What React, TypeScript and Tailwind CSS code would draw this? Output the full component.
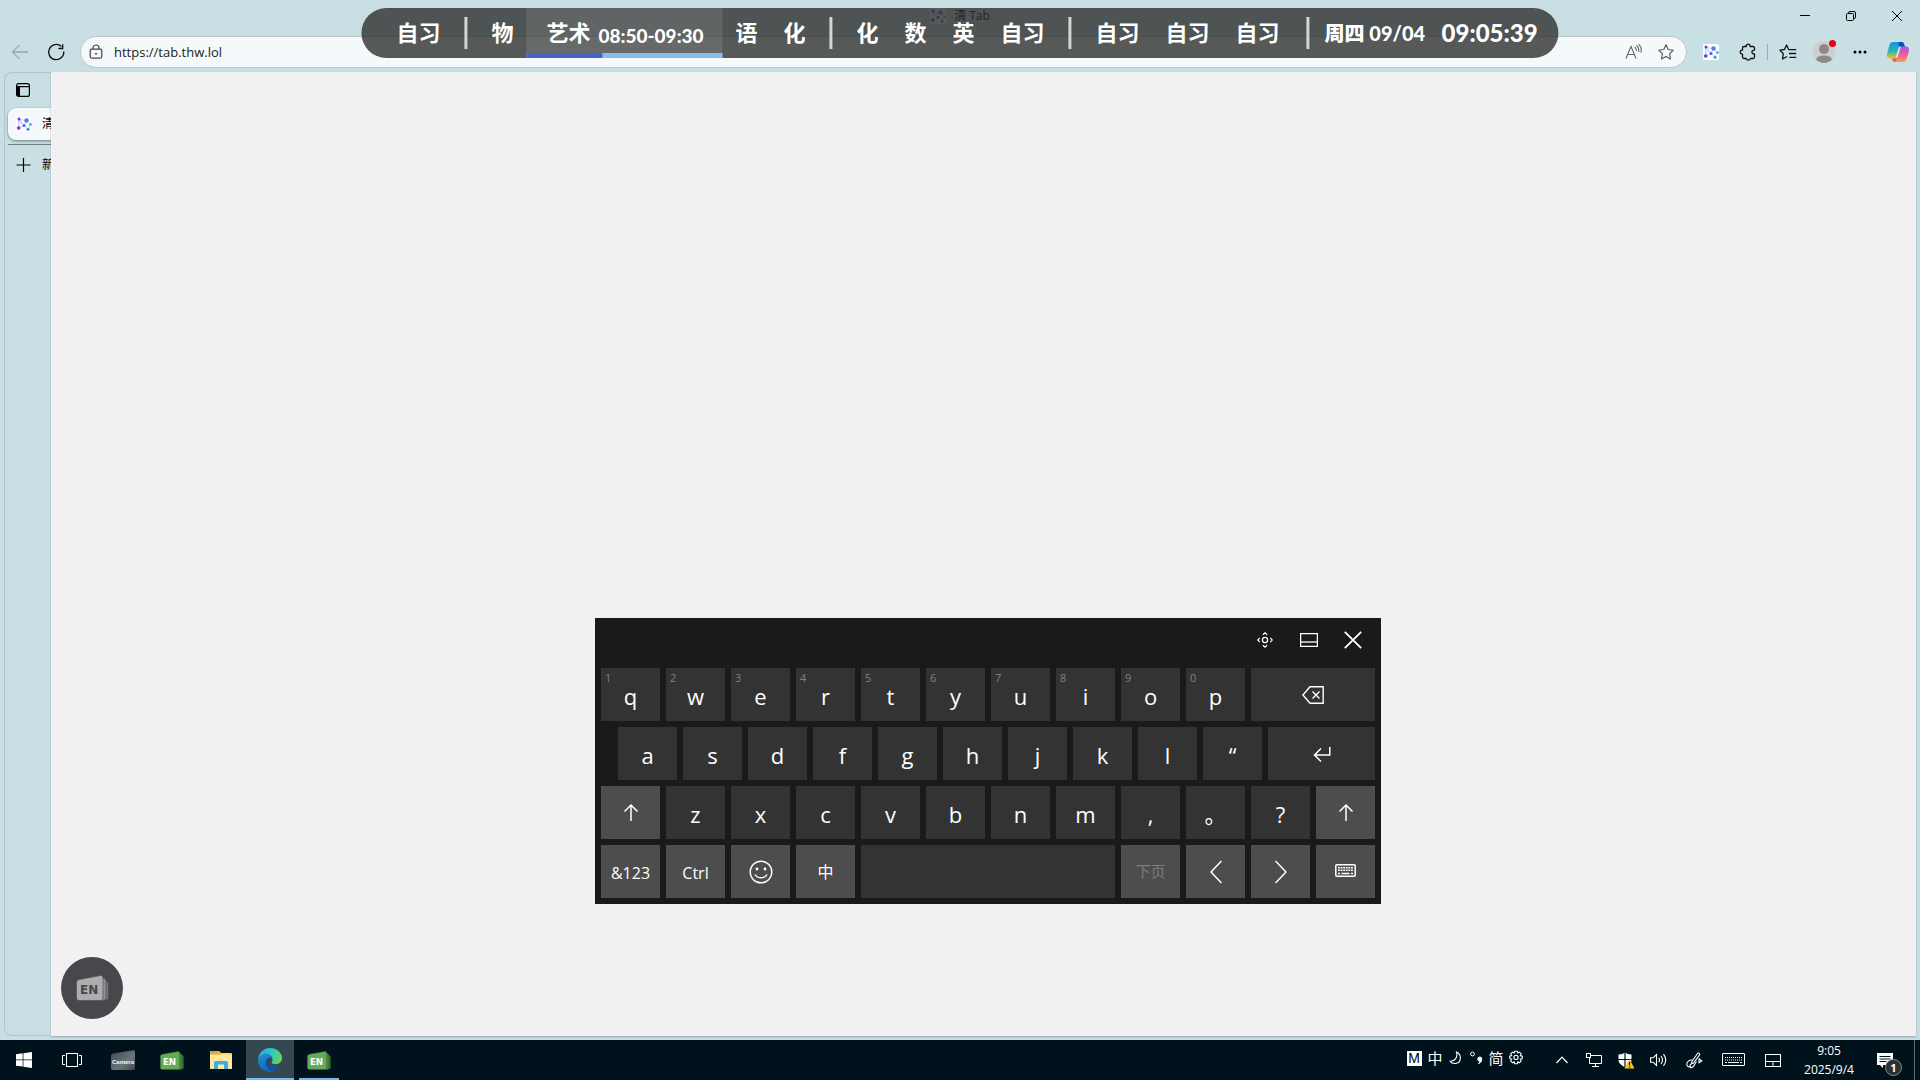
import React from "react";

type IconProps = { className?: string };

const UI = "font-['Open_Sans','Noto_Sans_CJK_SC',sans-serif]";

/* ---------- Browser icons ---------- */

const TabLogo = ({ className = "" }: IconProps) => (
  <svg viewBox="0 0 16 16" className={`size-4 shrink-0 ${className}`} aria-hidden="true">
    <rect width="16" height="16" rx="1.5" fill="#fbfdff" />
    <path d="M3 3.500 10.500 4.500 14.500 8.500 12 13 8 9.500 2.500 12ZM3 3.500 8 9.500M10.500 4.500 8 9.500M3 3.500 2.500 12" fill="none" stroke="#c3c5f3" strokeWidth=".8" />
    <circle cx="3" cy="3" r="1.500" fill="#6d35e6" />
    <circle cx="10.500" cy="4.500" r="2.200" fill="#4b83ee" />
    <circle cx="2.700" cy="12" r="1.800" fill="#7034ea" />
    <circle cx="8" cy="9.500" r="1.500" fill="#4b63e4" />
    <circle cx="14.500" cy="8.500" r="1.300" fill="#2fa6f4" />
    <circle cx="12" cy="13.300" r="1.500" fill="#3b8cf2" />
    <circle cx="5.500" cy="7" r=".8" fill="#9db2f5" />
  </svg>
);

const Back = () => (
  <svg viewBox="0 0 18 18" className="size-[18px]" fill="none" stroke="#7d898c" aria-hidden="true">
    <path d="M17 9H1.500M8.500 2 1.500 9l7 7" />
  </svg>
);

const Reload = () => (
  <svg viewBox="0 0 18 18" className="size-[18px]" fill="none" stroke="#111" strokeWidth="1.300" aria-hidden="true">
    <path d="M16.800 8.500a7.600 7.600 0 1 1-2.400-5M15.700 1.200v4.300h-4.300" />
  </svg>
);

const Lock = () => (
  <svg viewBox="0 0 14 16" className="h-4 w-[14px]" fill="none" stroke="#444" strokeWidth="1.200" aria-hidden="true">
    <rect x="1.200" y="5.200" width="11.600" height="9" rx="1.800" />
    <path d="M4 5V4a3 3 0 0 1 6 0v1" />
    <circle cx="7" cy="9.700" r="1" fill="#444" stroke="none" />
  </svg>
);

const ReadAloud = () => (
  <svg viewBox="0 0 18 18" className="size-[18px]" fill="none" stroke="#666" strokeWidth="1.100" aria-hidden="true">
    <path d="M1 15.500 6 3.500l5 12M2.800 11.500h6.500M9.800 4c1.300 1 1.700 2.400 1.500 4M11.500 2.500c2 1.600 2.700 3.700 2.200 6.500M13.500 1.200c2.400 2 3.200 4.800 2.500 8.300" />
  </svg>
);

const STAR = "m9 1.800 2.200 4.700 5.100.7-3.700 3.600.9 5.200L9 13.500l-4.500 2.500.9-5.200L1.700 7.200l5.100-.7Z";

const Star = () => (
  <svg viewBox="0 0 18 18" className="size-[18px]" fill="none" stroke="#555" strokeWidth="1.100" strokeLinejoin="round" aria-hidden="true">
    <path d={STAR} />
  </svg>
);

const Puzzle = () => (
  <svg viewBox="0 0 18 18" className="size-[18px]" fill="none" stroke="#111" strokeWidth="1.300" strokeLinejoin="round" aria-hidden="true">
    <path d="M5 3.500h2.300c-.2-1.500.8-2.300 1.900-2.300s2.100.8 1.900 2.300H14a1.500 1.500 0 0 1 1.500 1.500v2.200c-1.700-.1-2.600.7-2.600 1.900s.9 2 2.600 1.900V14a1.500 1.500 0 0 1-1.500 1.500h-2.600c-.2 1.100-.9 1.700-2 1.700s-1.900-.6-2.100-1.700H5A1.500 1.500 0 0 1 3.500 14v-2.800C2 11.200 1.200 10.300 1.200 9.100S2 7.100 3.500 7.200V5A1.500 1.500 0 0 1 5 3.500Z" />
  </svg>
);

const Favorites = () => (
  <svg viewBox="0 0 18 18" className="size-[18px]" fill="none" stroke="#111" strokeWidth="1.300" strokeLinejoin="round" aria-hidden="true">
    <path d="M9.500 6.200 7.600 2 5.500 6.500 1 7.200l3.300 3.400L3.500 16l4.600-2.500M9.300 6.700h7.900M10 10.500h7.200M10.500 14.300h6.700" />
  </svg>
);

const Copilot = () => (
  <svg viewBox="0 0 24 24" className="size-6" aria-hidden="true">
    <defs>
      <linearGradient id="cpA" x1="0" y1="0" x2="0" y2="1">
        <stop offset="0" stopColor="#1694e6" />
        <stop offset=".55" stopColor="#28b4b0" />
        <stop offset="1" stopColor="#f4c51c" />
      </linearGradient>
      <linearGradient id="cpB" x1="0" y1="0" x2="0" y2="1">
        <stop offset="0" stopColor="#a457ec" />
        <stop offset=".5" stopColor="#ee5b9b" />
        <stop offset="1" stopColor="#fb9a4b" />
      </linearGradient>
    </defs>
    <path d="M7 2h8.500c2 0 2.500 1.600 3 3.500L19 7h-3.500c-2 0-2.800 1.200-3.300 3L10.500 16c-.6 2-1.300 2.500-3 2.500H4C1.200 18.500.5 16 1.200 13L3.500 5C4.100 3 5 2 7 2Z" fill="url(#cpA)" />
    <path d="M13 2h2.500c2 0 2.500 1.600 3 3.500L19 7h-3.500c-2 0-2.800-.5-3.200-2Z" fill="#1549b5" />
    <path d="M17 22H9.500c-2 0-3-1.200-3.500-3.500H8c2 0 2.800-1 3.300-3L13 9c.5-1.600 1.500-2.500 3-2.500h4c2.800 0 3.500 2.500 2.800 5L20.500 19c-.6 2-1.500 3-3.500 3Z" fill="url(#cpB)" />
    <path d="m12.200 9.800 1-3.300h1.600l-2.900 9.600-1 1.700H9.700Z" fill="#dff0f2" />
    <path d="M6 18.500h2c1.200 0 2-.3 2.500-1L9.500 22C7.300 22 6.500 20.500 6 18.500Z" fill="#f4592f" />
  </svg>
);

/* ---------- Browser chrome ---------- */

const TitleBar = () => (
  <header className="relative flex h-9 shrink-0 items-start justify-center">
    <div className="flex h-8 items-center gap-2 text-xs text-black">
      <TabLogo />
      <span>清 Tab</span>
    </div>
    <div className="absolute top-0 right-0 flex">
      <button aria-label="最小化" className="flex h-8 w-[46px] items-center justify-center">
        <svg viewBox="0 0 12 12" className="size-3" stroke="#000" fill="none"><path d="M1 5.500h10" /></svg>
      </button>
      <button aria-label="还原" className="flex h-8 w-[46px] items-center justify-center">
        <svg viewBox="0 0 12 12" className="size-3" stroke="#000" fill="none">
          <rect x="1.500" y="3.500" width="7" height="7" rx="1" />
          <path d="M3.500 3.500V3A1.500 1.500 0 0 1 5 1.500h4A1.500 1.500 0 0 1 10.500 3v4A1.500 1.500 0 0 1 9 8.500h-.5" />
        </svg>
      </button>
      <button aria-label="关闭" className="flex h-8 w-[46px] items-center justify-center">
        <svg viewBox="0 0 12 12" className="size-3" stroke="#000" fill="none"><path d="m1 1 10 10M11 1 1 11" /></svg>
      </button>
    </div>
  </header>
);

const Toolbar = () => (
  <div className="flex h-9 shrink-0 items-start pr-[10px] pl-[11px]">
    <button aria-label="后退" className="flex h-8 w-[18px] items-center"><Back /></button>
    <button aria-label="刷新" className="ml-[18px] flex h-8 w-[18px] items-center"><Reload /></button>
    <div className="ml-[15px] flex h-8 grow items-center rounded-full border border-[#bfc5c6] bg-[#f5f9fb] pr-1 pl-2">
      <Lock />
      <input
        aria-label="地址栏"
        defaultValue="https://tab.thw.lol"
        className="ml-[11px] min-w-0 grow bg-transparent text-[13px] leading-5 text-[#222] outline-none"
      />
      <button aria-label="大声朗读" className="flex size-8 items-center justify-center"><ReadAloud /></button>
      <button aria-label="收藏此页" className="flex size-8 items-center justify-center"><Star /></button>
    </div>
    <div className="flex h-8 items-center pl-4">
      <button aria-label="清 Tab 扩展"><TabLogo /></button>
      <button aria-label="扩展" className="ml-5"><Puzzle /></button>
      <span className="ml-[10px] h-4 w-px bg-[#9aaeb2]" />
      <button aria-label="收藏夹" className="ml-[11px]"><Favorites /></button>
      <button aria-label="个人资料" className="relative ml-4 size-[22px]">
        <svg viewBox="0 0 22 22" className="size-[22px]">
          <circle cx="11" cy="11" r="11" fill="#d0cecc" />
          <circle cx="11" cy="8" r="5" fill="#8b8886" />
          <path d="M3 18.500c1-3 4-4 8-4s7 1 8 4A11 11 0 0 1 11 22a11 11 0 0 1-8-3.500Z" fill="#8b8886" />
        </svg>
        <span className="absolute -top-px -right-px size-[7px] rounded-full bg-[#e60012]" />
      </button>
      <button aria-label="设置及其他" className="ml-[18px]">
        <svg viewBox="0 0 14 4" className="h-1 w-[14px]"><circle cx="2" cy="2" r="1.500" /><circle cx="7" cy="2" r="1.500" /><circle cx="12" cy="2" r="1.500" /></svg>
      </button>
      <button aria-label="Copilot" className="ml-[19px]"><Copilot /></button>
    </div>
  </div>
);

const SideTabs = () => (
  <nav aria-label="垂直标签页" className="flex w-[47px] shrink-0 flex-col overflow-hidden rounded-l-lg border border-r-0 border-[#b0c8cc] pl-[3px] text-xs text-black">
    <button aria-label="标签页操作" className="flex h-[35px] shrink-0 items-center pb-[2px] pl-2">
      <svg viewBox="0 0 14 14" className="size-[14px]" fill="none" stroke="#000" strokeWidth="1.200">
        <rect x=".6" y=".6" width="12.800" height="12.800" rx="2" />
        <path d="M1 3.700h12" />
        <path d="M1 3.500h3v9.500H2Q1 13 1 12Z" fill="#000" stroke="none" />
      </svg>
    </button>
    <button className="flex h-8 w-[220px] shrink-0 items-center gap-[10px] rounded-lg bg-[#f5f9fb] pl-2 shadow-[0_1px_3px_rgba(0,0,0,0.45)]">
      <TabLogo />
      <span>清 Tab</span>
    </button>
    <hr className="mt-1 shrink-0 border-[#747f82]" />
    <button className="mt-1 flex h-8 w-[220px] shrink-0 items-center gap-[10px] pl-2">
      <svg viewBox="0 0 16 16" className="size-4 shrink-0" stroke="#000" strokeWidth="1.200"><path d="M7.500 1v14M.5 8h14" /></svg>
      <span>新建标签页</span>
    </button>
  </nav>
);

/* ---------- Stacked "EN" card logo ---------- */

const EnCards = ({ front, back, mid, edge, ink, className }: { front: string; back: string; mid: string; edge: string; ink: string; className: string }) => (
  <svg viewBox="0 0 33 26" className={className} aria-hidden="true">
    <path d="M26 5.500h3.500q3 .5 3 3v14q0 2.500-3 2.500H26Z" fill={back} stroke={edge} strokeWidth=".6" />
    <path d="M24 3h3.500q2.500.5 2.500 3v17q0 2.500-3 2.500h-3Z" fill={mid} stroke={edge} strokeWidth=".6" />
    <path d="M3 4.500 24.500.6q2.500-.4 2.500 2V23q0 2.500-2.500 2.500H3Q.5 25.500.5 23V7.500Q.5 5 3 4.500Z" fill={front} stroke={edge} strokeWidth=".6" />
    <text x="4" y="19" fontSize="12" fontWeight="700" fontFamily="DejaVu Sans, sans-serif" fill={ink}>EN</text>
  </svg>
);

/* ---------- Class schedule ---------- */

const Lesson = ({ children }: { children: string }) => <li className="px-[13px]">{children}</li>;
const Bar = () => <li aria-hidden="true" className="mx-[11px] h-8 w-[3px] bg-[#d4d6d6]" />;

const Schedule = () => (
  <section
    aria-label="课程表"
    className="absolute top-2 left-1/2 flex h-[50px] -translate-x-1/2 items-center rounded-full bg-[#303030]/80 pr-[22px] pl-[22px] font-['Lato','Noto_Sans_CJK_SC',sans-serif] text-[22px] leading-8 font-bold whitespace-nowrap text-white"
  >
    <ul className="flex h-full items-center">
      <Lesson>自习</Lesson>
      <Bar />
      <Lesson>物</Lesson>
      <li className="relative flex h-full w-[196px] items-center gap-2 bg-white/10 pl-5">
        <span>艺术</span>
        <span className="pt-[6px] text-[19px] leading-6 font-black">08:50-09:30</span>
        <span className="absolute inset-x-0 bottom-0 flex h-[5px] bg-[#8abcf0]">
          <span className="w-[39%] bg-[#4466c4]" />
        </span>
      </li>
      <Lesson>语</Lesson>
      <Lesson>化</Lesson>
      <Bar />
      <Lesson>化</Lesson>
      <Lesson>数</Lesson>
      <Lesson>英</Lesson>
      <Lesson>自习</Lesson>
      <Bar />
      <Lesson>自习</Lesson>
      <Lesson>自习</Lesson>
      <Lesson>自习</Lesson>
      <li aria-hidden="true" className="mr-[15px] ml-[14px] h-8 w-[3px] bg-[#d4d6d6]" />
    </ul>
    <span className="w-[117px] text-[20px] font-black">周四 09/04</span>
    <time className="w-[95px] text-[24px] font-black">09:05:39</time>
  </section>
);

/* ---------- Touch keyboard ---------- */

const keyBase = "relative flex h-[53px] items-center justify-center";

const LetterKey = ({ label, hint }: { label: string; hint?: string }) => (
  <button className={`${keyBase} w-[59px] bg-[#333] pt-[2px] text-[22px] leading-7 text-white`}>
    {hint && <span className="absolute top-1 left-1 text-[11px] leading-3 text-[#808080]">{hint}</span>}
    {label}
  </button>
);

const FnKey = ({ label, children, dim }: { label: string; children: React.ReactNode; dim?: boolean }) => (
  <button aria-label={label} className={`${keyBase} w-[59px] bg-[#4d4d4d] text-[16px] ${dim ? "text-[#7c7c7c]" : "text-white"}`}>
    {children}
  </button>
);

const ShiftArrow = () => (
  <svg viewBox="0 0 16 20" className="h-5 w-4" fill="none" stroke="#fff" strokeWidth="1.500"><path d="M8 18V2M1.500 8.500 8 2l6.500 6.500" /></svg>
);

const Keyboard = () => (
  <section aria-label="触摸键盘" className="absolute top-[618px] left-[595px] flex flex-col gap-[6px] bg-[#1a1a1a] px-[6px] pb-[6px]">
    <div className="flex h-11 items-center justify-end">
      <button aria-label="移动" className="flex h-11 w-11 items-center justify-center">
        <svg viewBox="0 0 16 16" className="size-4" fill="none" stroke="#fff" strokeWidth="1.200">
          <circle cx="8" cy="8" r="2.600" />
          <path d="M5.800 2.700 8 .8l2.200 1.900M5.800 13.300 8 15.200l2.200-1.900M2.700 5.800.8 8l1.900 2.200M13.300 5.800 15.200 8l-1.900 2.200" />
        </svg>
      </button>
      <button aria-label="停靠" className="flex h-11 w-11 items-center justify-center">
        <svg viewBox="0 0 18 14" className="h-[14px] w-[18px]" fill="none" stroke="#fff" strokeWidth="1.300"><rect x=".6" y=".6" width="16.800" height="12.800" /><path d="M1 9h16" /></svg>
      </button>
      <button aria-label="关闭键盘" className="flex h-11 w-11 items-center justify-center">
        <svg viewBox="0 0 18 18" className="size-[18px]" fill="none" stroke="#fff" strokeWidth="1.800"><path d="m.8.8 16.400 16.400M17.200.8.8 17.200" /></svg>
      </button>
    </div>
    <div className="flex gap-[6px]">
      {"qwertyuiop".split("").map((k, i) => <LetterKey key={k} label={k} hint={String((i + 1) % 10)} />)}
      <button aria-label="退格" className={`${keyBase} w-[124px] bg-[#333]`}>
        <svg viewBox="0 0 22 18" className="h-[18px] w-[22px]" fill="none" stroke="#fff" strokeWidth="1.400"><path d="M8 .8h13.200v16.400H8L.9 9ZM10.500 5.500l7 7M17.500 5.500l-7 7" /></svg>
      </button>
    </div>
    <div className="flex gap-[6px] pl-[17px]">
      {"asdfghjkl“".split("").map((k) => <LetterKey key={k} label={k} />)}
      <button aria-label="回车" className={`${keyBase} w-[107px] bg-[#333]`}>
        <svg viewBox="0 0 18 16" className="h-4 w-[18px]" fill="none" stroke="#fff" strokeWidth="1.500"><path d="M16.800 1v8H1.500M8 2.500 1.500 9 8 15.500" /></svg>
      </button>
    </div>
    <div className="flex gap-[6px]">
      <FnKey label="Shift"><ShiftArrow /></FnKey>
      {"zxcvbnm,。?".split("").map((k) => <LetterKey key={k} label={k} />)}
      <FnKey label="右 Shift"><ShiftArrow /></FnKey>
    </div>
    <div className="flex gap-[6px]">
      <FnKey label="&123"><span className="pt-[2px]">&amp;123</span></FnKey>
      <FnKey label="Ctrl"><span className="pt-[2px]">Ctrl</span></FnKey>
      <FnKey label="表情符号">
        <svg viewBox="0 0 24 24" className="size-6" fill="none" stroke="#fff" strokeWidth="1.400">
          <circle cx="12" cy="12" r="10.800" />
          <path d="M6 14.500c2.500 4.300 9.500 4.300 12 0" />
          <circle cx="8" cy="9" r="1.400" fill="#fff" stroke="none" /><circle cx="16" cy="9" r="1.400" fill="#fff" stroke="none" />
        </svg>
      </FnKey>
      <FnKey label="中文">中</FnKey>
      <button aria-label="空格" className={`${keyBase} w-[254px] bg-[#333]`} />
      <FnKey label="下页" dim><span className="text-[15px]">下页</span></FnKey>
      <FnKey label="向左"><svg viewBox="0 0 12 24" className="h-6 w-3" fill="none" stroke="#fff" strokeWidth="1.500"><path d="M11.500 1 1 12l10.500 11" /></svg></FnKey>
      <FnKey label="向右"><svg viewBox="0 0 12 24" className="h-6 w-3" fill="none" stroke="#fff" strokeWidth="1.500"><path d="M.5 1 11 12 .5 23" /></svg></FnKey>
      <FnKey label="键盘布局">
        <svg viewBox="0 0 21 13" className="mb-[2px] h-[13px] w-[21px]" fill="none" stroke="#fff" strokeWidth="1.500">
          <rect x=".8" y=".8" width="19.400" height="11.400" rx="1" />
          <path d="M3 3.700h15M3 6.300h15" strokeWidth="1.600" strokeDasharray="1.900 .7" /><path d="M3 9.500h2M6.500 9.500h8M16 9.500h2" />
        </svg>
      </FnKey>
    </div>
  </section>
);

/* ---------- Taskbar ---------- */

const TaskButton = ({ label, children, className = "" }: { label: string; children: React.ReactNode; className?: string }) => (
  <button aria-label={label} className={`relative flex h-10 w-12 items-center justify-center ${className}`}>{children}</button>
);

const EdgeLogo = () => (
  <svg viewBox="0 0 24 24" className="size-6">
    <defs>
      <linearGradient id="eg1" x1="0" y1=".3" x2="1" y2=".5"><stop offset="0" stopColor="#2ba8e0" /><stop offset=".55" stopColor="#2fc6c9" /><stop offset="1" stopColor="#62dc52" /></linearGradient>
      <linearGradient id="eg2" x1="0" y1="0" x2=".4" y2="1"><stop offset="0" stopColor="#1b93dc" /><stop offset="1" stopColor="#1069bd" /></linearGradient>
    </defs>
    <path d="M.2 10.500C1 4.500 6 0 12 0c6.700 0 12 4.600 12 10 0 3.900-3 6.200-6.300 6.200-2.700 0-4.200-.9-4.200-1.700 0-.6 1-1 1-2.700 0-2.600-2.800-5-6.200-5-3.800 0-6.500 1.400-8.100 3.700Z" fill="url(#eg1)" />
    <path d="M0 12c.4-3.600 4-6.200 8.200-6.200 3 0 5.700 1.700 6.200 4-3.800-1.300-6.600 1.500-6.600 5 0 4.200 3.300 8 8 8.500A12 12 0 0 1 0 12Z" fill="url(#eg2)" />
    <path d="M9.700 11c-1.200 1-1.900 2.200-1.900 4 0 4 3 7.800 8 8.300 2.700-.8 4.900-2.400 6.400-4.700.3-.5-.1-.8-.5-.6-1 .4-2.300.7-3.700.7-5 0-8.500-3.400-8.300-7.700Z" fill="#1a4f9b" />
  </svg>
);

const TrayIcon = ({ label, children, className }: { label: string; children: React.ReactNode; className: string }) => (
  <button aria-label={label} className={`flex h-10 items-center justify-center ${className}`}>{children}</button>
);

const greenCards = <EnCards className="h-[19px] w-6" front="#63ab57" mid="#4a8a42" back="#356b32" edge="#2f5f2e" ink="#fff" />;

const Taskbar = () => (
  <footer className="flex h-10 shrink-0 items-center justify-between bg-[#00131d] text-white">
    <div className="flex">
      <TaskButton label="开始">
        <svg viewBox="0 0 16 16" className="size-4" fill="#fff"><path d="M0 2.300 6.700 1.300v6.300H0ZM7.400 1.200 16 0v7.600H7.400ZM0 8.300h6.700v6.300L0 13.700ZM7.400 8.300H16V16l-8.600-1.200Z" /></svg>
      </TaskButton>
      <TaskButton label="任务视图">
        <svg viewBox="0 0 20 14" className="h-[14px] w-5" fill="none" stroke="#fff"><rect x="4.500" y=".5" width="11" height="13" /><path d="M3 2.500H.5v9H3M17 2.500h2.500v9H17" /></svg>
      </TaskButton>
      <div className="ml-[3px] flex gap-px">
        <TaskButton label="Camera">
          <svg viewBox="0 0 24 20" className="h-5 w-6">
            <defs><linearGradient id="cam" x1="0" y1="0" x2="1" y2="1"><stop offset="0" stopColor="#3f4850" /><stop offset=".6" stopColor="#6b747a" /><stop offset="1" stopColor="#40474d" /></linearGradient></defs>
            <path d="M2 3.500 22 .2q2-.3 2 1.800v16q0 2-2 2H2q-2 0-2-2V5.500q0-1.700 2-2Z" fill="url(#cam)" />
            <text x="12" y="14" textAnchor="middle" fontSize="6" fontWeight="700" fontFamily="Liberation Sans, sans-serif" fill="#f2f5f7">Camera</text>
          </svg>
        </TaskButton>
        <TaskButton label="EN">{greenCards}</TaskButton>
        <TaskButton label="文件资源管理器">
          <svg viewBox="0 0 22 18" className="h-[18px] w-[22px]">
            <path d="M0 1q0-1 1-1h8l2 2h10q1 0 1 1v14q0 1-1 1H1q-1 0-1-1Z" fill="#fbd775" /><path d="M0 2V1q0-1 1-1h8l2 2v1.500H0Z" fill="#eeb02f" /><path d="M1.500 1.200h3" stroke="#49a6d8" />
            <path d="M0 4h22v13q0 1-1 1H1q-1 0-1-1Z" fill="#ffe69b" />
            <path d="M4 18v-6q0-2 2-2h10q2 0 2 2v6h-4v-4.500H8V18Z" fill="#3aaee3" />
          </svg>
        </TaskButton>
        <TaskButton label="Microsoft Edge" className="bg-[#35474f]">
          <EdgeLogo />
          <span className="absolute inset-x-0 bottom-0 h-[2px] bg-[#76b9ed]" />
        </TaskButton>
        <TaskButton label="EN 窗口">
          {greenCards}
          <span className="absolute inset-x-1 bottom-0 h-[2px] bg-[#76b9ed]" />
        </TaskButton>
      </div>
    </div>
    <div className="flex items-center">
      <div className="mr-5 flex items-center pb-1 text-[15px]">
        <TrayIcon label="输入法" className="w-5"><span className="flex size-[15px] items-center justify-center bg-white font-['Liberation_Sans',sans-serif] text-[14px] text-black">M</span></TrayIcon>
        <TrayIcon label="中文" className="w-[22px]">中</TrayIcon>
        <TrayIcon label="半角" className="w-5"><svg viewBox="0 0 14 14" className="size-[14px]" fill="none" stroke="#fff" strokeWidth="1.100"><path d="M7.500 1c5.500 2.500 5 11-1 11.500-2.500.2-4.500-.8-5.300-2.300C6 10.500 9 6 7.500 1Z" /></svg></TrayIcon>
        <TrayIcon label="标点" className="w-5"><svg viewBox="0 0 14 14" className="size-[14px]" fill="none" stroke="#fff"><circle cx="3.500" cy="3" r="1.900" /><path d="M10.700 6a2 2 0 0 1 2 2.200c0 2.300-1.300 3.800-3.200 4.300 1-.9 1.400-1.600 1.400-2.400A2 2 0 0 1 10.700 6Z" fill="#fff" /></svg></TrayIcon>
        <TrayIcon label="简体" className="w-5">简</TrayIcon>
        <TrayIcon label="设置" className="w-5"><svg viewBox="0 0 16 16" className="size-4" fill="none" stroke="#fff" strokeWidth="1.100"><path d="m6.700 1.200 2.600 0 .5 1.800 1.600-.9 1.800 1.800-.9 1.700 1.900.5v2.600l-1.900.5.900 1.700-1.800 1.900-1.600-.9-.5 1.800H6.700l-.5-1.800-1.700.9-1.800-1.900.9-1.700-1.800-.5V6.100l1.800-.5-.9-1.700 1.800-1.800 1.700.9Z" /><circle cx="8" cy="7.400" r="2.100" /></svg></TrayIcon>
      </div>
      <TrayIcon label="显示隐藏的图标" className="w-8"><svg viewBox="0 0 12 8" className="h-2 w-3" fill="none" stroke="#fff" strokeWidth="1.200"><path d="M.5 7 6 1.200 11.500 7" /></svg></TrayIcon>
      <TrayIcon label="网络" className="w-8"><svg viewBox="0 0 16 14" className="h-[14px] w-4" fill="none" stroke="#fff"><path d="M5 2.500h10.500v8H3.500V5M9.500 10.500v3M6 13.500h7" /><rect x=".5" y=".5" width="4" height="4" /></svg></TrayIcon>
      <TrayIcon label="Windows 安全中心" className="w-8">
        <svg viewBox="0 0 17 17" className="size-[17px]"><path d="M7 .5Q9.500 2.500 13.500 2.500V8c0 3-3 5.500-6.500 7C3.500 13.500.5 11 .5 8V2.500Q4.500 2.500 7 .5Z" fill="#fff" /><path d="M7 0v15M0 7.500h14" stroke="#00131d" strokeWidth="1.200" /><path d="M11.500 7 16.500 16.500h-10Z" fill="#fbc21b" /><path d="M11.500 10v3.500M11.500 14.200v1.300" stroke="#222" strokeWidth="1.200" /></svg>
      </TrayIcon>
      <TrayIcon label="音量" className="w-8"><svg viewBox="0 0 17 14" className="h-[14px] w-[17px]" fill="none" stroke="#fff" strokeWidth="1.100"><path d="M.6 4.800h2.600L6.500 1.500v11L3.200 9.200H.6ZM8.700 4.700q1.600 2.300 0 4.600M11 3q3 4 0 8M13.500 1.200q4.500 5.800 0 11.600" /></svg></TrayIcon>
      <TrayIcon label="Windows Ink 工作区" className="w-10"><svg viewBox="0 0 17 17" className="size-[17px]" fill="none" stroke="#fff" strokeWidth="1.100"><path d="M6 9.500 11.500 1.500q1.200-1 2 .2.500.8-.2 1.600L7.500 11l-2.200.8ZM6.500 8C3 7.500.8 10 .8 12.500s3 3 4.200 1.500M13 6.500v4.200L15.800 9l-2.500-2M5.500 11.800c-2.500 1.200-2 4.500.5 3.700 2.500-1 2-3 4.500-6" /></svg></TrayIcon>
      <TrayIcon label="触摸键盘" className="w-[38px]"><svg viewBox="0 0 23 14" className="h-[14px] w-[23px]" fill="none" stroke="#fff"><rect x=".5" y=".5" width="22" height="12" rx=".5" /><path d="M3 4.500h17M3 7h17" strokeDasharray="1 1" /><path d="M3 9.500h2M6 9.500h11M18 9.500h2" /></svg></TrayIcon>
      <TrayIcon label="虚拟触摸板" className="w-[42px]"><svg viewBox="0 0 16 13" className="h-[13px] w-4" fill="none" stroke="#fff"><rect x=".5" y=".5" width="15" height="12" /><path d="M.5 7.500h15M8 7.500v5" /></svg></TrayIcon>
      <button className="flex w-[70px] flex-col items-center text-xs leading-[19px]">
        <span>9:05</span>
        <span>2025/9/4</span>
      </button>
      <TrayIcon label="通知" className="relative w-[50px]">
        <svg viewBox="0 0 16 15" className="mr-2 h-[15px] w-4"><path d="M0 0h16v12H6v3l-3-3H0Z" fill="#fff" /><path d="M2.500 3.500h11M2.500 6h11M2.500 8.500h7" stroke="#00131d" /></svg>
        <span className="absolute top-[19px] left-[21px] flex size-[17px] items-center justify-center rounded-full border border-[#888] bg-[#2b3034] text-[11px] leading-3 font-bold">1</span>
      </TrayIcon>
      <button aria-label="显示桌面" className="h-10 w-[6px] border-l border-[#5e6a70]" />
    </div>
  </footer>
);

export default function App() {
  return (
    <div className={`relative flex h-screen flex-col overflow-hidden bg-[#c8e0e4] ${UI}`}>
      <TitleBar />
      <Toolbar />
      <div className="flex min-h-0 grow pr-1 pb-1 pl-1">
        <SideTabs />
        <main className="relative grow bg-[#f1f1f1] shadow-[0_1px_2px_rgba(0,0,0,0.25)]">
          <button aria-label="EN" className="absolute bottom-[17px] left-[10px] flex size-[62px] items-center justify-center rounded-full bg-[#47474c]">
            <EnCards className="h-[26px] w-[33px]" front="#adadaf" mid="#929295" back="#77777a" edge="#47474c" ink="#47474c" />
          </button>
        </main>
      </div>
      <Taskbar />
      <Schedule />
      <Keyboard />
    </div>
  );
}
